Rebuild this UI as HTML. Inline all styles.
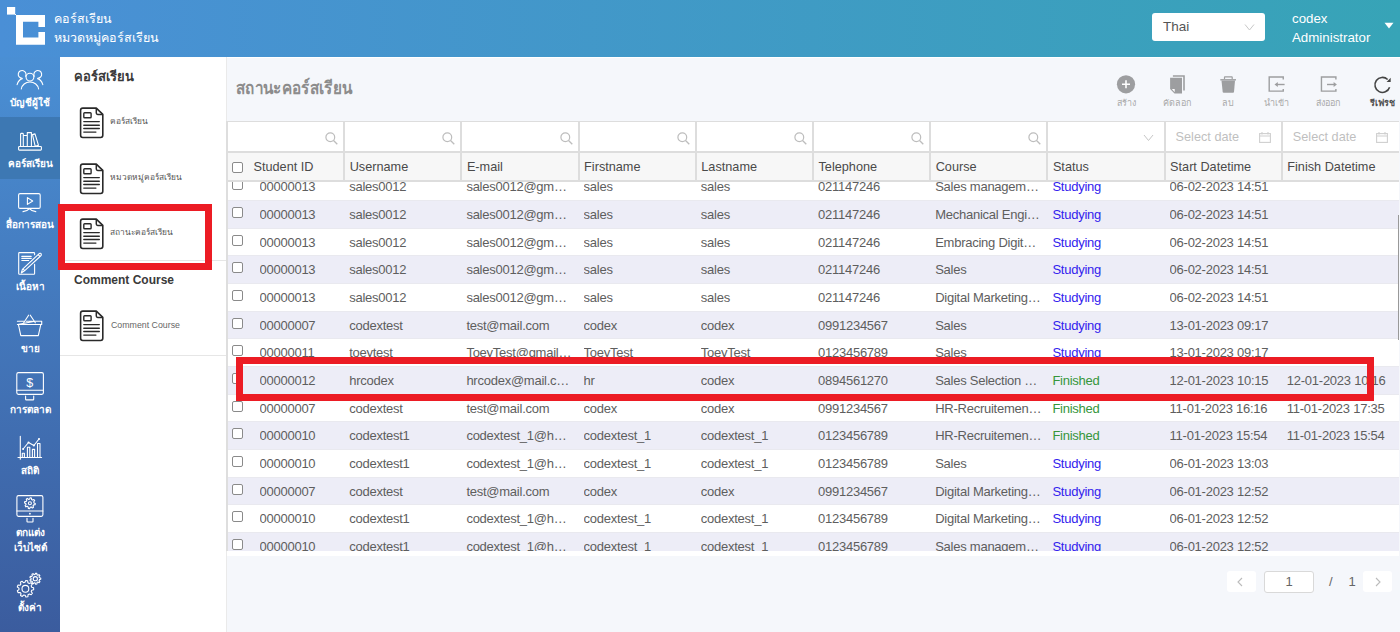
<!DOCTYPE html><html><head><meta charset="utf-8"><style>
*{margin:0;padding:0;box-sizing:border-box}
html,body{width:1400px;height:632px;overflow:hidden;background:#f5f7fb;font-family:"Liberation Sans",sans-serif;position:relative}
.a{position:absolute}
.hdr{left:0;top:0;width:1400px;height:57px;background:linear-gradient(90deg,#4a8fd6 0%,#37a4b7 100%)}
.side{left:0;top:57px;width:60px;height:575px;background:linear-gradient(180deg,#4a8fd4 0%,#3b5c9e 100%)}
.side .it{position:absolute;left:0;width:60px;text-align:center;color:#fff;font-size:10px;font-weight:bold;line-height:13px}
.side2{left:60px;top:57px;width:167px;height:575px;background:#fff;border-right:1px solid #eaeaea}
.s2h{position:absolute;left:14px;font-size:13px;font-weight:bold;color:#333}
.s2i{position:absolute;left:19px}
.s2l{position:absolute;left:50px;font-size:8.4px;color:#555;white-space:nowrap}
.title{left:236px;top:72.5px;font-size:18px;font-weight:bold;color:#8c8c8c;transform:scaleX(0.85);transform-origin:0 0}
.tb{position:absolute;top:74px;width:50px;text-align:center}
.tbl{position:absolute;top:96px;width:60px;text-align:center;font-size:9px;color:#aaa;white-space:nowrap}
.filt{left:227px;top:121px;width:1172px;height:31px;background:#fff;border-top:1px solid #ddd}
.head{left:227px;top:151px;width:1172px;height:31px;background:#f7f7f7;border-top:2px solid #ddd;border-bottom:2px solid #ddd}
.vl{position:absolute;width:2px;background:#ddd}
.body{left:227px;top:182px;width:1172px;height:369px;overflow:hidden;background:#fff}
.row{position:absolute;left:0;width:1172px;height:27.667px}
.row.o{background:#ededf7}
.row{border-top:1px solid #e9e9ef}
.c{position:absolute;top:0px;height:27.667px;line-height:27.667px;font-size:13px;letter-spacing:-0.25px;color:#5e5e5e;white-space:nowrap;overflow:hidden;text-overflow:ellipsis}
.hc{position:absolute;top:0;height:26px;line-height:28px;font-size:12.7px;color:#4a4a4a;white-space:nowrap}
.cb{position:absolute;width:11px;height:11px;border:1px solid #8a8a8a;border-radius:2px;background:#fff}
.stud{color:#3322ee}
.fin{color:#36963a}
</style></head><body>
<div class="a hdr"></div><div class="a" style="left:0;top:57px;width:1400px;height:1px;background:#fff"></div>
<svg class="a" style="left:0;top:0" width="60" height="57" viewBox="0 0 60 57"><rect x="7" y="7" width="8.2" height="7.6" fill="#fff"/><path d="M15 14 L16.5 15.5" stroke="#fff" stroke-width="1"/><path d="M16 15 H45 V27 H38.4 V21.7 H23 V37.5 H38.4 V32 H45 V44.8 H16 Z" fill="#fff"/></svg>
<div class="a" style="left:54px;top:10px;color:#fff;font-size:12.5px;line-height:19px">คอร์สเรียน<br>หมวดหมู่คอร์สเรียน</div>
<div class="a" style="left:1152px;top:13px;width:113px;height:28px;background:#fff;border-radius:3px"></div>
<div class="a" style="left:1163px;top:19px;font-size:13.5px;color:#555">Thai</div>
<svg class="a" style="left:1244px;top:23px" width="11" height="9" viewBox="0 0 11 9"><path d="M1 1.5 L5.5 7 L10 1.5" fill="none" stroke="#c8c8c8" stroke-width="1"/></svg>
<div class="a" style="left:1292px;top:9px;font-size:13.3px;color:#fff;line-height:19px">codex<br>Administrator</div>
<svg class="a" style="left:1384px;top:22px" width="10" height="7" viewBox="0 0 10 7"><path d="M0.5 0.8 H9.5 L5 6.5 Z" fill="#fff"/></svg>
<div class="a side"></div>
<div class="a" style="left:0;top:117px;width:60px;height:62px;background:#3d78b3"></div>
<svg class="a" style="left:0;top:0" width="60" height="632" viewBox="0 0 60 632"><circle cx="29.95" cy="77.1" r="3.9" stroke="#fff" fill="none" stroke-width="1.1" stroke-linejoin="round" stroke-linecap="round"/><path d="M21.3 89 A8.7 7.8 0 0 1 38.6 89" stroke="#fff" fill="none" stroke-width="1.1" stroke-linejoin="round" stroke-linecap="round"/><path d="M25.6 76.2 A3.9 3.9 0 1 0 22.2 78.3 M22.3 78.6 Q18.5 79.6 17.1 84.7" stroke="#fff" fill="none" stroke-width="1.1" stroke-linejoin="round" stroke-linecap="round"/><path d="M34.3 76.2 A3.9 3.9 0 1 1 37.7 78.3 M37.6 78.6 Q41.4 79.6 42.8 84.7" stroke="#fff" fill="none" stroke-width="1.1" stroke-linejoin="round" stroke-linecap="round"/><rect x="18.6" y="146.5" width="22.8" height="3.6" rx="0.8" stroke="#fff" fill="none" stroke-width="1.1" stroke-linejoin="round" stroke-linecap="round"/><path d="M20.6 146.5 V134.2 Q20.6 133.4 21.4 133.4 H22.5 Q23.3 133.4 23.3 134.2 V146.5 M23.3 135.5 H27.3 V146.5 M27.3 146.5 V132.6 H31.4 V146.5 M32.5 134.6 L35 133.9 L38.5 145.3 L35.2 146.3 Z" stroke="#fff" fill="none" stroke-width="1.1" stroke-linejoin="round" stroke-linecap="round"/><rect x="18.6" y="193.6" width="21.6" height="14.8" rx="1.5" stroke="#fff" fill="none" stroke-width="1.1" stroke-linejoin="round" stroke-linecap="round"/><path d="M27.4 197.6 V204.4 L32.7 201 Z" stroke="#fff" fill="none" stroke-width="1.1" stroke-linejoin="round" stroke-linecap="round"/><path d="M29.4 208.6 Q27 211.4 23 211.6 M29.4 208.6 Q31.8 211.4 35.8 211.6" stroke="#fff" fill="none" stroke-width="1.1" stroke-linejoin="round" stroke-linecap="round"/><path d="M34.6 254.8 V253.2 Q34.6 252.6 33.8 252.6 H19.4 Q18.7 252.6 18.7 253.4 V273.6 Q18.7 274.3 19.4 274.3 H33.9 Q34.6 274.3 34.6 273.6 V264.4" stroke="#fff" fill="none" stroke-width="1.1" stroke-linejoin="round" stroke-linecap="round"/><path d="M21.8 256.4 H31.2 M21.8 258.4 H31.2 M21.8 260.5 H28.7" stroke="#fff" fill="none" stroke-width="1.1" stroke-linejoin="round" stroke-linecap="round"/><path d="M39.2 253.6 Q40.6 252.8 41.2 254.1 Q41.6 255.2 40.6 256 L24.5 270.8 L21.3 273 L22.4 269.4 Z M38.2 254.6 L40 256.6 M22.9 268.9 L24.8 270.6" stroke="#fff" fill="none" stroke-width="1.1" stroke-linejoin="round" stroke-linecap="round"/><path d="M17.4 321.3 H23.8 M26.3 321.3 H32.6 M35.2 321.3 H41.7 V324.5 H17.4 Z" stroke="#fff" fill="none" stroke-width="1.1" stroke-linejoin="round" stroke-linecap="round"/><path d="M18.4 324.5 L20.8 335.6 H38.3 L40.8 324.5" stroke="#fff" fill="none" stroke-width="1.1" stroke-linejoin="round" stroke-linecap="round"/><path d="M23.7 322.8 L28.6 315.2 M30.3 315.2 L35.3 322.8" stroke="#fff" fill="none" stroke-width="1.1" stroke-linejoin="round" stroke-linecap="round"/><rect x="16.8" y="372.6" width="26.6" height="21.8" rx="1.6" stroke="#fff" fill="none" stroke-width="1.1" stroke-linejoin="round" stroke-linecap="round"/><path d="M16.8 390.2 H43.4 M25.6 396 V399.2 Q25.6 399.9 26.3 399.9 H33 Q33.7 399.9 33.7 399.2 V396" stroke="#fff" fill="none" stroke-width="1.1" stroke-linejoin="round" stroke-linecap="round"/><text x="29.8" y="386.6" font-size="12.5" fill="#fff" text-anchor="middle" font-family="Liberation Sans">$</text><path d="M20.3 436.2 V459.2 M18 457.5 H41.6" stroke="#fff" fill="none" stroke-width="1.1" stroke-linejoin="round" stroke-linecap="round"/><path d="M22.3 457.5 V453.2 H24.4 V457.5 M27.4 457.5 V447.3 H29.8 V457.5 M32.4 457.5 V449.4 H34.6 V457.5 M37.5 457.5 V443.5 H40 V457.5" stroke="#fff" fill="none" stroke-width="1.1" stroke-linejoin="round" stroke-linecap="round"/><path d="M23.1 449 L28.5 442.5 L33.9 445.5 L39 439" stroke="#fff" fill="none" stroke-width="1.1" stroke-linejoin="round" stroke-linecap="round"/><circle cx="23.1" cy="449" r="1" fill="#fff"/><circle cx="28.5" cy="442.5" r="1" fill="#fff"/><circle cx="33.9" cy="445.5" r="1" fill="#fff"/><circle cx="39" cy="439" r="1" fill="#fff"/><rect x="16.9" y="495.6" width="26" height="20.8" rx="1.6" stroke="#fff" fill="none" stroke-width="1.1" stroke-linejoin="round" stroke-linecap="round"/><path d="M16.9 511 H42.9 M27 518.2 V521.4 Q27 522 27.6 522 H32.4 Q33 522 33 521.4 V518.2" stroke="#fff" fill="none" stroke-width="1.1" stroke-linejoin="round" stroke-linecap="round"/><circle cx="29.9" cy="513.7" r="0.9" fill="#fff"/><path d="M29.58 499.11 L30.15 497.81 L31.49 498.04 L31.59 499.46 L32.56 500.08 L33.89 499.57 L34.67 500.67 L33.74 501.75 L33.99 502.88 L35.29 503.45 L35.06 504.79 L33.64 504.89 L33.02 505.86 L33.53 507.19 L32.43 507.97 L31.35 507.04 L30.22 507.29 L29.65 508.59 L28.31 508.36 L28.21 506.94 L27.24 506.32 L25.91 506.83 L25.13 505.73 L26.06 504.65 L25.81 503.52 L24.51 502.95 L24.74 501.61 L26.16 501.51 L26.78 500.54 L26.27 499.21 L27.37 498.43 L28.45 499.36 Z" stroke="#fff" fill="none" stroke-width="1.1" stroke-linejoin="round" stroke-linecap="round"/><circle cx="29.9" cy="503.2" r="1.5" stroke="#fff" fill="none" stroke-width="1.1" stroke-linejoin="round" stroke-linecap="round"/><path d="M24.95 582.32 L25.75 580.51 L27.69 580.82 L27.88 582.79 L29.22 583.54 L31.00 582.67 L32.28 584.16 L31.16 585.79 L31.71 587.23 L33.63 587.70 L33.65 589.67 L31.75 590.20 L31.24 591.65 L32.41 593.25 L31.17 594.77 L29.37 593.95 L28.04 594.74 L27.91 596.71 L25.98 597.08 L25.13 595.29 L23.61 595.05 L22.24 596.47 L20.52 595.51 L21.02 593.60 L20.01 592.43 L18.04 592.65 L17.35 590.81 L18.96 589.66 L18.94 588.12 L17.29 587.02 L17.94 585.16 L19.91 585.32 L20.88 584.12 L20.34 582.22 L22.02 581.22 L23.43 582.60 Z" stroke="#fff" fill="none" stroke-width="1.1" stroke-linejoin="round" stroke-linecap="round"/><circle cx="25.4" cy="588.8" r="3.4" stroke="#fff" fill="none" stroke-width="1.1" stroke-linejoin="round" stroke-linecap="round"/><path d="M35.01 574.51 L35.53 573.20 L36.82 573.41 L36.90 574.82 L37.77 575.30 L39.01 574.64 L39.86 575.62 L39.02 576.75 L39.38 577.68 L40.75 577.97 L40.77 579.27 L39.40 579.60 L39.07 580.54 L39.94 581.65 L39.12 582.66 L37.86 582.03 L37.01 582.54 L36.96 583.94 L35.68 584.19 L35.12 582.90 L34.14 582.74 L33.20 583.79 L32.07 583.15 L32.47 581.80 L31.82 581.05 L30.43 581.25 L29.96 580.03 L31.14 579.26 L31.12 578.26 L29.93 577.52 L30.36 576.29 L31.75 576.45 L32.38 575.68 L31.94 574.34 L33.06 573.68 L34.03 574.70 Z" stroke="#fff" fill="none" stroke-width="1.1" stroke-linejoin="round" stroke-linecap="round"/><circle cx="35.3" cy="578.7" r="2.1" stroke="#fff" fill="none" stroke-width="1.1" stroke-linejoin="round" stroke-linecap="round"/></svg>
<div class="a" style="left:0;top:94.5px;width:60px;text-align:center;color:#fff;font-size:10px;font-weight:bold;line-height:15px">บัญชีผู้ใช้</div>
<div class="a" style="left:0;top:155.5px;width:60px;text-align:center;color:#fff;font-size:10px;font-weight:bold;line-height:15px">คอร์สเรียน</div>
<div class="a" style="left:0;top:216.5px;width:60px;text-align:center;color:#fff;font-size:10px;font-weight:bold;line-height:15px">สื่อการสอน</div>
<div class="a" style="left:0;top:278.5px;width:60px;text-align:center;color:#fff;font-size:10px;font-weight:bold;line-height:15px">เนื้อหา</div>
<div class="a" style="left:0;top:340.5px;width:60px;text-align:center;color:#fff;font-size:10px;font-weight:bold;line-height:15px">ขาย</div>
<div class="a" style="left:0;top:401.5px;width:60px;text-align:center;color:#fff;font-size:10px;font-weight:bold;line-height:15px">การตลาด</div>
<div class="a" style="left:0;top:463px;width:60px;text-align:center;color:#fff;font-size:10px;font-weight:bold;line-height:15px">สถิติ</div>
<div class="a" style="left:0;top:524.5px;width:60px;text-align:center;color:#fff;font-size:10px;font-weight:bold;line-height:15px">ตกแต่ง<br>เว็บไซต์</div>
<div class="a" style="left:0;top:599.5px;width:60px;text-align:center;color:#fff;font-size:10px;font-weight:bold;line-height:15px">ตั้งค่า</div>
<div class="a side2"></div>
<div class="a s2h" style="left:74px;top:66px;color:#3a3a3a">คอร์สเรียน</div>
<div class="a" style="left:79px;top:107px"><svg width="26" height="32" viewBox="0 0 26 32" style="display:block"><path d="M3.8 1.1 H17.3 L23.8 7.4 V28.3 Q23.8 30.5 21.6 30.5 H3.8 Q1.6 30.5 1.6 28.3 V3.3 Q1.6 1.1 3.8 1.1 Z" fill="#fff" stroke="#2a2a2a" stroke-width="1.6" stroke-linejoin="round"/><path d="M17.3 1.1 V6 Q17.3 7.4 18.7 7.4 H23.8" fill="none" stroke="#2a2a2a" stroke-width="1.5" stroke-linejoin="round"/><rect x="4.8" y="5.8" width="7.3" height="4.9" rx="0.8" fill="none" stroke="#2a2a2a" stroke-width="1.4"/><path d="M4.8 14.6 H20.3 M4.8 18.2 H20.3 M4.8 21.5 H20.3 M4.8 25.1 H16.9" stroke="#2a2a2a" stroke-width="1.4" stroke-linecap="round"/></svg></div>
<div class="a s2l" style="left:110px;top:114px">คอร์สเรียน</div>
<div class="a" style="left:79px;top:163px"><svg width="26" height="32" viewBox="0 0 26 32" style="display:block"><path d="M3.8 1.1 H17.3 L23.8 7.4 V28.3 Q23.8 30.5 21.6 30.5 H3.8 Q1.6 30.5 1.6 28.3 V3.3 Q1.6 1.1 3.8 1.1 Z" fill="#fff" stroke="#2a2a2a" stroke-width="1.6" stroke-linejoin="round"/><path d="M17.3 1.1 V6 Q17.3 7.4 18.7 7.4 H23.8" fill="none" stroke="#2a2a2a" stroke-width="1.5" stroke-linejoin="round"/><rect x="4.8" y="5.8" width="7.3" height="4.9" rx="0.8" fill="none" stroke="#2a2a2a" stroke-width="1.4"/><path d="M4.8 14.6 H20.3 M4.8 18.2 H20.3 M4.8 21.5 H20.3 M4.8 25.1 H16.9" stroke="#2a2a2a" stroke-width="1.4" stroke-linecap="round"/></svg></div>
<div class="a s2l" style="left:110px;top:170px">หมวดหมู่คอร์สเรียน</div>
<div class="a" style="left:79px;top:218px"><svg width="26" height="32" viewBox="0 0 26 32" style="display:block"><path d="M3.8 1.1 H17.3 L23.8 7.4 V28.3 Q23.8 30.5 21.6 30.5 H3.8 Q1.6 30.5 1.6 28.3 V3.3 Q1.6 1.1 3.8 1.1 Z" fill="#fff" stroke="#2a2a2a" stroke-width="1.6" stroke-linejoin="round"/><path d="M17.3 1.1 V6 Q17.3 7.4 18.7 7.4 H23.8" fill="none" stroke="#2a2a2a" stroke-width="1.5" stroke-linejoin="round"/><rect x="4.8" y="5.8" width="7.3" height="4.9" rx="0.8" fill="none" stroke="#2a2a2a" stroke-width="1.4"/><path d="M4.8 14.6 H20.3 M4.8 18.2 H20.3 M4.8 21.5 H20.3 M4.8 25.1 H16.9" stroke="#2a2a2a" stroke-width="1.4" stroke-linecap="round"/></svg></div>
<div class="a s2l" style="left:110px;top:225px">สถานะคอร์สเรียน</div>
<div class="a" style="left:60px;top:260px;width:167px;height:1px;background:#e6e6e6"></div>
<div class="a s2h" style="left:74px;top:273px;font-size:12px;color:#3a3a3a">Comment Course</div>
<div class="a" style="left:79px;top:310px"><svg width="26" height="32" viewBox="0 0 26 32" style="display:block"><path d="M3.8 1.1 H17.3 L23.8 7.4 V28.3 Q23.8 30.5 21.6 30.5 H3.8 Q1.6 30.5 1.6 28.3 V3.3 Q1.6 1.1 3.8 1.1 Z" fill="#fff" stroke="#2a2a2a" stroke-width="1.6" stroke-linejoin="round"/><path d="M17.3 1.1 V6 Q17.3 7.4 18.7 7.4 H23.8" fill="none" stroke="#2a2a2a" stroke-width="1.5" stroke-linejoin="round"/><rect x="4.8" y="5.8" width="7.3" height="4.9" rx="0.8" fill="none" stroke="#2a2a2a" stroke-width="1.4"/><path d="M4.8 14.6 H20.3 M4.8 18.2 H20.3 M4.8 21.5 H20.3 M4.8 25.1 H16.9" stroke="#2a2a2a" stroke-width="1.4" stroke-linecap="round"/></svg></div>
<div class="a s2l" style="left:111px;top:320px;font-size:8.8px;color:#666">Comment Course</div>
<div class="a" style="left:60px;top:355px;width:167px;height:1px;background:#e6e6e6"></div>
<div class="a title">สถานะคอร์สเรียน</div>
<div class="a" style="left:1116px;top:75px"><svg width="20" height="20" viewBox="0 0 20 20" style="position:absolute;left:-0.3px;top:0"><circle cx="10" cy="9.3" r="9.1" fill="#9d9ea0"/><path d="M10 5.3 V13.3 M6 9.3 H14" stroke="#fff" stroke-width="1.6"/></svg></div>
<div class="a" style="left:1096px;top:96px;width:60px;text-align:center;font-size:9px;color:#aaa;font-weight:normal;white-space:nowrap">สร้าง</div>
<div class="a" style="left:1167px;top:75px"><svg width="20" height="20" viewBox="0 0 20 20"><path d="M5.9 0.2 H17.8 V15.6 H16.2 V1.8 H5.9 Z" fill="#9d9ea0"/><path d="M3.1 2.7 H15 V18.6 H7.5 L3.1 14 Z" fill="#9d9ea0"/><path d="M4.9 14 H7.7 V17.2 Z" fill="#fff"/></svg></div>
<div class="a" style="left:1147px;top:96px;width:60px;text-align:center;font-size:9px;color:#aaa;font-weight:normal;white-space:nowrap">คัดลอก</div>
<div class="a" style="left:1218px;top:75px"><svg width="20" height="20" viewBox="0 0 20 20"><path d="M2.3 4.1 H18 V5.5 H2.3 Z" fill="#9d9ea0"/><path d="M5.9 4.1 V2.2 Q5.9 1.2 6.9 1.2 H13.8 Q14.8 1.2 14.8 2.2 V4.1 H13.6 V2.5 H7.1 V4.1 Z" fill="#9d9ea0"/><path d="M3.5 5.5 H17 L16 17 Q15.9 17.8 15 17.8 H5.7 Q4.8 17.8 4.7 17 Z" fill="#9d9ea0"/></svg></div>
<div class="a" style="left:1198px;top:96px;width:60px;text-align:center;font-size:9px;color:#aaa;font-weight:normal;white-space:nowrap">ลบ</div>
<div class="a" style="left:1266px;top:75px"><svg width="20" height="20" viewBox="0 0 20 20"><path d="M17.25 4.5 V2.05 H3.2 V16.1 H17.25 V13.9" fill="none" stroke="#9d9ea0" stroke-width="1.4"/><path d="M10.5 9.5 H18.6" stroke="#9d9ea0" stroke-width="1.4"/><path d="M8.5 9.5 L11.8 7.1 V11.9 Z" fill="#9d9ea0"/></svg></div>
<div class="a" style="left:1246px;top:96px;width:60px;text-align:center;font-size:9px;color:#aaa;font-weight:normal;white-space:nowrap">นำเข้า</div>
<div class="a" style="left:1318px;top:75px"><svg width="20" height="20" viewBox="0 0 20 20"><path d="M17.9 4.5 V2.05 H3.45 V16.1 H17.9 V13.9" fill="none" stroke="#9d9ea0" stroke-width="1.4"/><path d="M9 9.5 H16" stroke="#9d9ea0" stroke-width="1.4"/><path d="M18.9 9.5 L15.6 7.1 V11.9 Z" fill="#9d9ea0"/></svg></div>
<div class="a" style="left:1298px;top:96px;width:60px;text-align:center;font-size:9px;color:#aaa;font-weight:normal;white-space:nowrap">ส่งออก</div>
<div class="a" style="left:1372px;top:75px"><svg width="20" height="20" viewBox="0 0 20 20"><path d="M17.6 12.2 A7.5 7.5 0 1 1 15.65 4.48" fill="none" stroke="#444" stroke-width="1.6"/><path d="M18.7 2.8 V6.9 H14.6 Z" fill="#444"/></svg></div>
<div class="a" style="left:1352px;top:96px;width:60px;text-align:center;font-size:9px;color:#505050;font-weight:bold;white-space:nowrap">รีเฟรช</div>
<div class="a filt">
<div class="a" style="left:98.2px;top:9px"><svg width="13" height="13" viewBox="0 0 13 13"><circle cx="5.3" cy="5.3" r="4.4" fill="none" stroke="#bdbdbd" stroke-width="1.2"/><line x1="8.5" y1="8.5" x2="12.3" y2="12.3" stroke="#bdbdbd" stroke-width="1.3"/></svg></div>
<div class="vl" style="left:116.2px;top:0;height:31px"></div>
<div class="a" style="left:215.4px;top:9px"><svg width="13" height="13" viewBox="0 0 13 13"><circle cx="5.3" cy="5.3" r="4.4" fill="none" stroke="#bdbdbd" stroke-width="1.2"/><line x1="8.5" y1="8.5" x2="12.3" y2="12.3" stroke="#bdbdbd" stroke-width="1.3"/></svg></div>
<div class="vl" style="left:233.4px;top:0;height:31px"></div>
<div class="a" style="left:332.6px;top:9px"><svg width="13" height="13" viewBox="0 0 13 13"><circle cx="5.3" cy="5.3" r="4.4" fill="none" stroke="#bdbdbd" stroke-width="1.2"/><line x1="8.5" y1="8.5" x2="12.3" y2="12.3" stroke="#bdbdbd" stroke-width="1.3"/></svg></div>
<div class="vl" style="left:350.6px;top:0;height:31px"></div>
<div class="a" style="left:449.8px;top:9px"><svg width="13" height="13" viewBox="0 0 13 13"><circle cx="5.3" cy="5.3" r="4.4" fill="none" stroke="#bdbdbd" stroke-width="1.2"/><line x1="8.5" y1="8.5" x2="12.3" y2="12.3" stroke="#bdbdbd" stroke-width="1.3"/></svg></div>
<div class="vl" style="left:467.8px;top:0;height:31px"></div>
<div class="a" style="left:567.0px;top:9px"><svg width="13" height="13" viewBox="0 0 13 13"><circle cx="5.3" cy="5.3" r="4.4" fill="none" stroke="#bdbdbd" stroke-width="1.2"/><line x1="8.5" y1="8.5" x2="12.3" y2="12.3" stroke="#bdbdbd" stroke-width="1.3"/></svg></div>
<div class="vl" style="left:585.0px;top:0;height:31px"></div>
<div class="a" style="left:684.2px;top:9px"><svg width="13" height="13" viewBox="0 0 13 13"><circle cx="5.3" cy="5.3" r="4.4" fill="none" stroke="#bdbdbd" stroke-width="1.2"/><line x1="8.5" y1="8.5" x2="12.3" y2="12.3" stroke="#bdbdbd" stroke-width="1.3"/></svg></div>
<div class="vl" style="left:702.2px;top:0;height:31px"></div>
<div class="a" style="left:801.4px;top:9px"><svg width="13" height="13" viewBox="0 0 13 13"><circle cx="5.3" cy="5.3" r="4.4" fill="none" stroke="#bdbdbd" stroke-width="1.2"/><line x1="8.5" y1="8.5" x2="12.3" y2="12.3" stroke="#bdbdbd" stroke-width="1.3"/></svg></div>
<div class="vl" style="left:819.4px;top:0;height:31px"></div>
<div class="vl" style="left:936.6px;top:0;height:31px"></div>
<div class="vl" style="left:1053.8px;top:0;height:31px"></div>
<svg class="a" style="left:916.4px;top:12px" width="11" height="8" viewBox="0 0 11 8"><path d="M1 1 L5.5 6.5 L10 1" fill="none" stroke="#c6c6c6" stroke-width="1"/></svg>
<div class="a" style="left:948.6px;top:6px;font-size:12.7px;color:#bfbfbf;line-height:18px">Select date</div>
<svg class="a" style="left:1032.1px;top:10px" width="12" height="11" viewBox="0 0 12 11"><rect x="0.6" y="1.6" width="10.8" height="8.8" fill="none" stroke="#cfcfcf" stroke-width="1.1"/><path d="M0.6 4 H11.4 M3 0 V2.5 M9 0 V2.5" stroke="#cfcfcf" stroke-width="1.1"/></svg>
<div class="a" style="left:1065.8px;top:6px;font-size:12.7px;color:#bfbfbf;line-height:18px">Select date</div>
<svg class="a" style="left:1149.3px;top:10px" width="12" height="11" viewBox="0 0 12 11"><rect x="0.6" y="1.6" width="10.8" height="8.8" fill="none" stroke="#cfcfcf" stroke-width="1.1"/><path d="M0.6 4 H11.4 M3 0 V2.5 M9 0 V2.5" stroke="#cfcfcf" stroke-width="1.1"/></svg>
</div>
<div class="a head">
<div class="cb" style="left:5px;top:9px"></div>
<div class="hc" style="left:26.5px">Student ID</div>
<div class="vl" style="left:116.2px;top:-2px;height:30px"></div>
<div class="hc" style="left:122.7px">Username</div>
<div class="vl" style="left:233.4px;top:-2px;height:30px"></div>
<div class="hc" style="left:239.9px">E-mail</div>
<div class="vl" style="left:350.6px;top:-2px;height:30px"></div>
<div class="hc" style="left:357.1px">Firstname</div>
<div class="vl" style="left:467.8px;top:-2px;height:30px"></div>
<div class="hc" style="left:474.3px">Lastname</div>
<div class="vl" style="left:585.0px;top:-2px;height:30px"></div>
<div class="hc" style="left:591.5px">Telephone</div>
<div class="vl" style="left:702.2px;top:-2px;height:30px"></div>
<div class="hc" style="left:708.7px">Course</div>
<div class="vl" style="left:819.4px;top:-2px;height:30px"></div>
<div class="hc" style="left:825.9px">Status</div>
<div class="vl" style="left:936.6px;top:-2px;height:30px"></div>
<div class="hc" style="left:943.1px">Start Datetime</div>
<div class="vl" style="left:1053.8px;top:-2px;height:30px"></div>
<div class="hc" style="left:1060.3px">Finish Datetime</div>
</div>
<div class="a body">
<div class="row" style="top:-9.667px">
<div class="cb" style="left:5px;top:6px"></div>
<div class="c" style="left:32.5px;width:80px">00000013</div>
<div class="c" style="left:122.2px;width:107.2px">sales0012</div>
<div class="c" style="left:239.4px;width:107.2px">sales0012@gmail.com</div>
<div class="c" style="left:356.6px;width:107.2px">sales</div>
<div class="c" style="left:473.8px;width:107.2px">sales</div>
<div class="c" style="left:591.0px;width:107.2px">021147246</div>
<div class="c" style="left:708.2px;width:107.2px">Sales management</div>
<div class="c stud" style="left:825.4px;width:107.2px">Studying</div>
<div class="c" style="left:942.6px;width:107.2px">06-02-2023 14:51</div>
<div class="c" style="left:1059.8px;width:107.2px"></div>
</div>
<div class="row o" style="top:18.000px">
<div class="cb" style="left:5px;top:6px"></div>
<div class="c" style="left:32.5px;width:80px">00000013</div>
<div class="c" style="left:122.2px;width:107.2px">sales0012</div>
<div class="c" style="left:239.4px;width:107.2px">sales0012@gmail.com</div>
<div class="c" style="left:356.6px;width:107.2px">sales</div>
<div class="c" style="left:473.8px;width:107.2px">sales</div>
<div class="c" style="left:591.0px;width:107.2px">021147246</div>
<div class="c" style="left:708.2px;width:107.2px">Mechanical Engineering</div>
<div class="c stud" style="left:825.4px;width:107.2px">Studying</div>
<div class="c" style="left:942.6px;width:107.2px">06-02-2023 14:51</div>
<div class="c" style="left:1059.8px;width:107.2px"></div>
</div>
<div class="row" style="top:45.667px">
<div class="cb" style="left:5px;top:6px"></div>
<div class="c" style="left:32.5px;width:80px">00000013</div>
<div class="c" style="left:122.2px;width:107.2px">sales0012</div>
<div class="c" style="left:239.4px;width:107.2px">sales0012@gmail.com</div>
<div class="c" style="left:356.6px;width:107.2px">sales</div>
<div class="c" style="left:473.8px;width:107.2px">sales</div>
<div class="c" style="left:591.0px;width:107.2px">021147246</div>
<div class="c" style="left:708.2px;width:107.2px">Embracing Digital Marketing</div>
<div class="c stud" style="left:825.4px;width:107.2px">Studying</div>
<div class="c" style="left:942.6px;width:107.2px">06-02-2023 14:51</div>
<div class="c" style="left:1059.8px;width:107.2px"></div>
</div>
<div class="row o" style="top:73.334px">
<div class="cb" style="left:5px;top:6px"></div>
<div class="c" style="left:32.5px;width:80px">00000013</div>
<div class="c" style="left:122.2px;width:107.2px">sales0012</div>
<div class="c" style="left:239.4px;width:107.2px">sales0012@gmail.com</div>
<div class="c" style="left:356.6px;width:107.2px">sales</div>
<div class="c" style="left:473.8px;width:107.2px">sales</div>
<div class="c" style="left:591.0px;width:107.2px">021147246</div>
<div class="c" style="left:708.2px;width:107.2px">Sales</div>
<div class="c stud" style="left:825.4px;width:107.2px">Studying</div>
<div class="c" style="left:942.6px;width:107.2px">06-02-2023 14:51</div>
<div class="c" style="left:1059.8px;width:107.2px"></div>
</div>
<div class="row" style="top:101.001px">
<div class="cb" style="left:5px;top:6px"></div>
<div class="c" style="left:32.5px;width:80px">00000013</div>
<div class="c" style="left:122.2px;width:107.2px">sales0012</div>
<div class="c" style="left:239.4px;width:107.2px">sales0012@gmail.com</div>
<div class="c" style="left:356.6px;width:107.2px">sales</div>
<div class="c" style="left:473.8px;width:107.2px">sales</div>
<div class="c" style="left:591.0px;width:107.2px">021147246</div>
<div class="c" style="left:708.2px;width:107.2px">Digital Marketing 101</div>
<div class="c stud" style="left:825.4px;width:107.2px">Studying</div>
<div class="c" style="left:942.6px;width:107.2px">06-02-2023 14:51</div>
<div class="c" style="left:1059.8px;width:107.2px"></div>
</div>
<div class="row o" style="top:128.668px">
<div class="cb" style="left:5px;top:6px"></div>
<div class="c" style="left:32.5px;width:80px">00000007</div>
<div class="c" style="left:122.2px;width:107.2px">codextest</div>
<div class="c" style="left:239.4px;width:107.2px">test@mail.com</div>
<div class="c" style="left:356.6px;width:107.2px">codex</div>
<div class="c" style="left:473.8px;width:107.2px">codex</div>
<div class="c" style="left:591.0px;width:107.2px">0991234567</div>
<div class="c" style="left:708.2px;width:107.2px">Sales</div>
<div class="c stud" style="left:825.4px;width:107.2px">Studying</div>
<div class="c" style="left:942.6px;width:107.2px">13-01-2023 09:17</div>
<div class="c" style="left:1059.8px;width:107.2px"></div>
</div>
<div class="row" style="top:156.335px">
<div class="cb" style="left:5px;top:6px"></div>
<div class="c" style="left:32.5px;width:80px">00000011</div>
<div class="c" style="left:122.2px;width:107.2px">toeytest</div>
<div class="c" style="left:239.4px;width:107.2px">ToeyTest@gmail.com</div>
<div class="c" style="left:356.6px;width:107.2px">ToeyTest</div>
<div class="c" style="left:473.8px;width:107.2px">ToeyTest</div>
<div class="c" style="left:591.0px;width:107.2px">0123456789</div>
<div class="c" style="left:708.2px;width:107.2px">Sales</div>
<div class="c stud" style="left:825.4px;width:107.2px">Studying</div>
<div class="c" style="left:942.6px;width:107.2px">13-01-2023 09:17</div>
<div class="c" style="left:1059.8px;width:107.2px"></div>
</div>
<div class="row o" style="top:184.002px">
<div class="cb" style="left:5px;top:6px"></div>
<div class="c" style="left:32.5px;width:80px">00000012</div>
<div class="c" style="left:122.2px;width:107.2px">hrcodex</div>
<div class="c" style="left:239.4px;width:107.2px">hrcodex@mail.com</div>
<div class="c" style="left:356.6px;width:107.2px">hr</div>
<div class="c" style="left:473.8px;width:107.2px">codex</div>
<div class="c" style="left:591.0px;width:107.2px">0894561270</div>
<div class="c" style="left:708.2px;width:107.2px">Sales Selection Test</div>
<div class="c fin" style="left:825.4px;width:107.2px">Finished</div>
<div class="c" style="left:942.6px;width:107.2px">12-01-2023 10:15</div>
<div class="c" style="left:1059.8px;width:107.2px">12-01-2023 10:16</div>
</div>
<div class="row" style="top:211.669px">
<div class="cb" style="left:5px;top:6px"></div>
<div class="c" style="left:32.5px;width:80px">00000007</div>
<div class="c" style="left:122.2px;width:107.2px">codextest</div>
<div class="c" style="left:239.4px;width:107.2px">test@mail.com</div>
<div class="c" style="left:356.6px;width:107.2px">codex</div>
<div class="c" style="left:473.8px;width:107.2px">codex</div>
<div class="c" style="left:591.0px;width:107.2px">0991234567</div>
<div class="c" style="left:708.2px;width:107.2px">HR-Recruitement 101</div>
<div class="c fin" style="left:825.4px;width:107.2px">Finished</div>
<div class="c" style="left:942.6px;width:107.2px">11-01-2023 16:16</div>
<div class="c" style="left:1059.8px;width:107.2px">11-01-2023 17:35</div>
</div>
<div class="row o" style="top:239.336px">
<div class="cb" style="left:5px;top:6px"></div>
<div class="c" style="left:32.5px;width:80px">00000010</div>
<div class="c" style="left:122.2px;width:107.2px">codextest1</div>
<div class="c" style="left:239.4px;width:107.2px">codextest_1@hotmail.com</div>
<div class="c" style="left:356.6px;width:107.2px">codextest_1</div>
<div class="c" style="left:473.8px;width:107.2px">codextest_1</div>
<div class="c" style="left:591.0px;width:107.2px">0123456789</div>
<div class="c" style="left:708.2px;width:107.2px">HR-Recruitement 101</div>
<div class="c fin" style="left:825.4px;width:107.2px">Finished</div>
<div class="c" style="left:942.6px;width:107.2px">11-01-2023 15:54</div>
<div class="c" style="left:1059.8px;width:107.2px">11-01-2023 15:54</div>
</div>
<div class="row" style="top:267.003px">
<div class="cb" style="left:5px;top:6px"></div>
<div class="c" style="left:32.5px;width:80px">00000010</div>
<div class="c" style="left:122.2px;width:107.2px">codextest1</div>
<div class="c" style="left:239.4px;width:107.2px">codextest_1@hotmail.com</div>
<div class="c" style="left:356.6px;width:107.2px">codextest_1</div>
<div class="c" style="left:473.8px;width:107.2px">codextest_1</div>
<div class="c" style="left:591.0px;width:107.2px">0123456789</div>
<div class="c" style="left:708.2px;width:107.2px">Sales</div>
<div class="c stud" style="left:825.4px;width:107.2px">Studying</div>
<div class="c" style="left:942.6px;width:107.2px">06-01-2023 13:03</div>
<div class="c" style="left:1059.8px;width:107.2px"></div>
</div>
<div class="row o" style="top:294.670px">
<div class="cb" style="left:5px;top:6px"></div>
<div class="c" style="left:32.5px;width:80px">00000007</div>
<div class="c" style="left:122.2px;width:107.2px">codextest</div>
<div class="c" style="left:239.4px;width:107.2px">test@mail.com</div>
<div class="c" style="left:356.6px;width:107.2px">codex</div>
<div class="c" style="left:473.8px;width:107.2px">codex</div>
<div class="c" style="left:591.0px;width:107.2px">0991234567</div>
<div class="c" style="left:708.2px;width:107.2px">Digital Marketing 101</div>
<div class="c stud" style="left:825.4px;width:107.2px">Studying</div>
<div class="c" style="left:942.6px;width:107.2px">06-01-2023 12:52</div>
<div class="c" style="left:1059.8px;width:107.2px"></div>
</div>
<div class="row" style="top:322.337px">
<div class="cb" style="left:5px;top:6px"></div>
<div class="c" style="left:32.5px;width:80px">00000010</div>
<div class="c" style="left:122.2px;width:107.2px">codextest1</div>
<div class="c" style="left:239.4px;width:107.2px">codextest_1@hotmail.com</div>
<div class="c" style="left:356.6px;width:107.2px">codextest_1</div>
<div class="c" style="left:473.8px;width:107.2px">codextest_1</div>
<div class="c" style="left:591.0px;width:107.2px">0123456789</div>
<div class="c" style="left:708.2px;width:107.2px">Digital Marketing 101</div>
<div class="c stud" style="left:825.4px;width:107.2px">Studying</div>
<div class="c" style="left:942.6px;width:107.2px">06-01-2023 12:52</div>
<div class="c" style="left:1059.8px;width:107.2px"></div>
</div>
<div class="row o" style="top:350.004px">
<div class="cb" style="left:5px;top:6px"></div>
<div class="c" style="left:32.5px;width:80px">00000010</div>
<div class="c" style="left:122.2px;width:107.2px">codextest1</div>
<div class="c" style="left:239.4px;width:107.2px">codextest_1@hotmail.com</div>
<div class="c" style="left:356.6px;width:107.2px">codextest_1</div>
<div class="c" style="left:473.8px;width:107.2px">codextest_1</div>
<div class="c" style="left:591.0px;width:107.2px">0123456789</div>
<div class="c" style="left:708.2px;width:107.2px">Sales management</div>
<div class="c stud" style="left:825.4px;width:107.2px">Studying</div>
<div class="c" style="left:942.6px;width:107.2px">06-01-2023 12:52</div>
<div class="c" style="left:1059.8px;width:107.2px"></div>
</div>
</div>
<div class="a" style="left:227px;top:551px;width:1172px;height:5px;background:#fff"></div>
<div class="a" style="left:226px;top:121px;width:2px;height:430px;background:#dedede"></div>
<div class="a" style="left:1398px;top:215px;width:1px;height:125px;background:#999"></div>
<div class="a" style="left:58px;top:204px;width:154px;height:66px;border:7.5px solid #ec1c24"></div>
<div class="a" style="left:235.5px;top:357px;width:1138px;height:43.5px;border:7px solid #ec1c24"></div>
<div class="a" style="left:1227px;top:571px;width:29px;height:21px;background:#fff;border-radius:3px"></div>
<svg class="a" style="left:1236px;top:577px" width="8" height="10" viewBox="0 0 8 10"><path d="M6 1 L2 5 L6 9" fill="none" stroke="#bbb" stroke-width="1.1"/></svg>
<div class="a" style="left:1264px;top:571px;width:50px;height:22px;background:#fff;border:1px solid #d9d9d9;border-radius:3px;text-align:center;line-height:20px;font-size:13px;color:#666">1</div>
<div class="a" style="left:1329px;top:573px;font-size:13px;color:#666;line-height:18px">/</div><div class="a" style="left:1348.5px;top:573px;font-size:13px;color:#666;line-height:18px">1</div>
<div class="a" style="left:1363px;top:571px;width:29px;height:21px;background:#fff;border-radius:3px"></div>
<svg class="a" style="left:1374px;top:577px" width="8" height="10" viewBox="0 0 8 10"><path d="M2 1 L6 5 L2 9" fill="none" stroke="#bbb" stroke-width="1.1"/></svg>
</body></html>
